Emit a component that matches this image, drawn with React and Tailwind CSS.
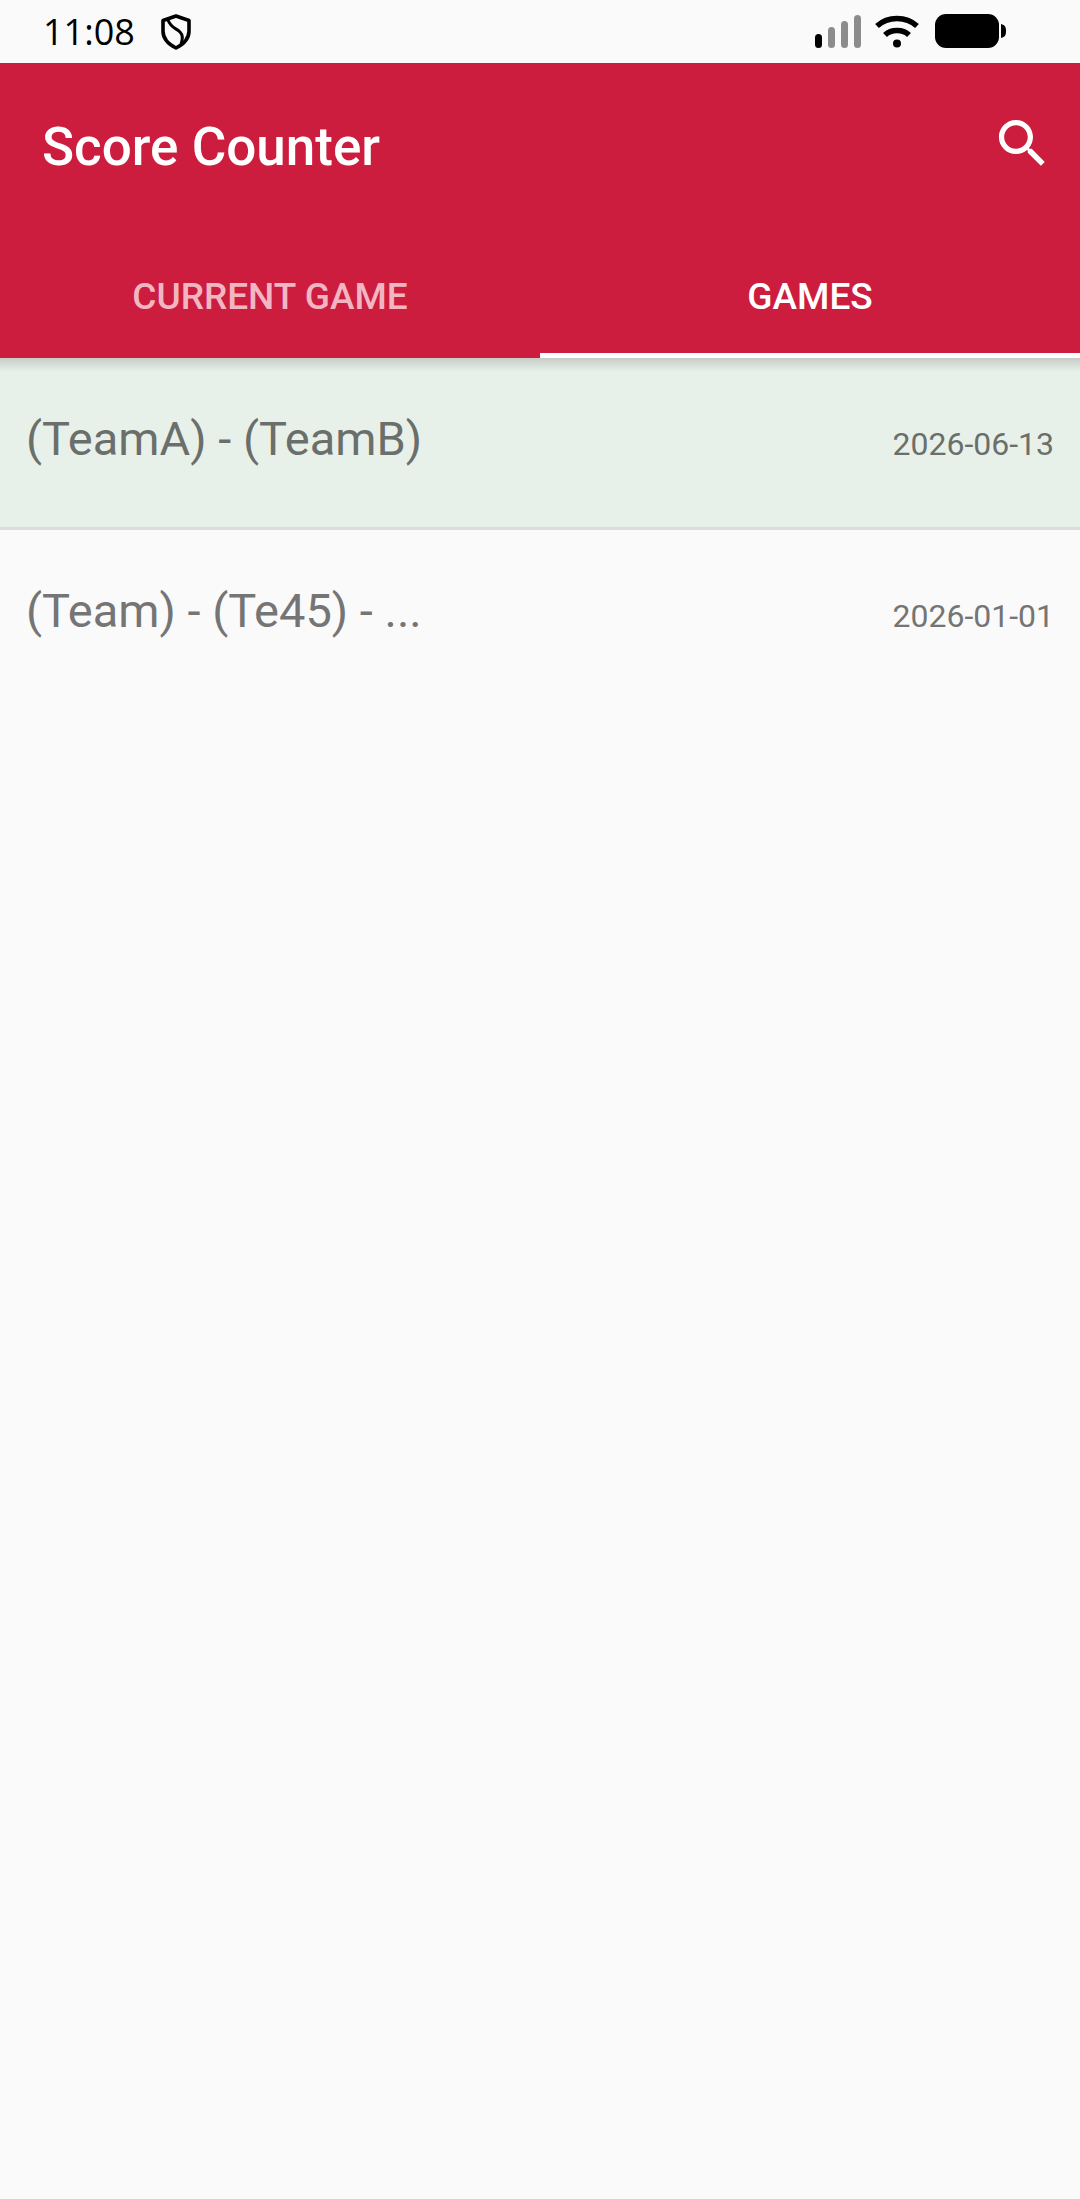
const ShieldIcon = () => (
  <svg width="32" height="36" viewBox="0 0 32 36" fill="none" stroke="#000" strokeWidth="3.6" className="ml-[1px]">
    <path d="M16 2 L29 6.5 V17 C29 25 23 30.5 16 34 C9 30.5 3 25 3 17 V6.5 Z" strokeLinejoin="round" />
    <path d="M8 6 C11 14 16 14 20 18 C23 21 23 25 21 30" strokeWidth="3" />
  </svg>
);

const StatusIcons = () => (
  <div className="flex items-center">
    <svg width="46" height="33" viewBox="0 0 46 33" className="mr-[14px]">
      <rect x="0" y="19" width="7" height="14" rx="3.5" fill="#000" />
      <rect x="13" y="12" width="7" height="21" rx="3.5" fill="#8c8c8c" />
      <rect x="26" y="6" width="7" height="27" rx="3.5" fill="#8c8c8c" />
      <rect x="39" y="0" width="7" height="33" rx="3.5" fill="#8c8c8c" />
    </svg>
    <svg width="44" height="33" viewBox="0 0 44 33" fill="none" stroke="#000" strokeWidth="5.5" className="mr-[16px]">
      <path d="M2 11 C13 1 31 1 42 11" />
      <path d="M10 20 C16 14 28 14 34 20" />
      <circle cx="22" cy="28.5" r="4" fill="#000" stroke="none" />
    </svg>
    <svg width="71" height="35" viewBox="0 0 71 35">
      <rect x="0" y="0" width="64" height="34" rx="11" fill="#000" />
      <path d="M66 10 C70 11 71 13 71 17 C71 21 70 23 66 24 Z" fill="#000" />
    </svg>
  </div>
);

const SearchIcon = () => (
  <svg width="63" height="63" viewBox="0 0 24 24" fill="#fff" className="mb-[8px]">
    <path d="M15.5 14h-.79l-.28-.27C15.41 12.59 16 11.11 16 9.5 16 5.91 13.09 3 9.5 3S3 5.91 3 9.5 5.91 16 9.5 16c1.61 0 3.09-.59 4.23-1.57l.27.28v.79l5 4.99L20.49 19l-4.99-5zm-6 0C7.01 14 5 11.99 5 9.5S7.01 5 9.5 5 14 7.01 14 9.5 11.99 14 9.5 14z" />
  </svg>
);

const games = [
  { title: "(TeamA) - (TeamB)", date: "2026-06-13", active: true },
  { title: "(Team) - (Te45) - ...", date: "2026-01-01", active: false },
];

export default function App() {
  return (
    <div className="min-h-[2199px] bg-[#fafafa] font-['Roboto',sans-serif]">
      {/* status bar */}
      <div className="h-[63px] flex items-center justify-between pl-[43px] pr-[74px]">
        <div className="flex items-center gap-[24px]">
          <span className="text-[36px] leading-none text-black font-['Open_Sans','Roboto',sans-serif]">11:08</span>
          <ShieldIcon />
        </div>
        <StatusIcons />
      </div>

      {/* app bar */}
      <div className="bg-[#cc1d3e] h-[295px] flex flex-col">
        <div className="h-[169px] flex items-center justify-between pl-[42px] pr-[26px]">
          <h1 className="text-[53px] font-medium text-white leading-none">Score Counter</h1>
          <SearchIcon />
        </div>
        <div className="flex-1 flex">
          <div className="flex-1 flex items-center justify-center pt-[8px] border-b-[5px] border-transparent text-[37px] font-medium text-[#f2b6c3]">
            CURRENT GAME
          </div>
          <div className="flex-1 flex items-center justify-center pt-[8px] border-b-[5px] border-white text-[37px] font-medium text-white">
            GAMES
          </div>
        </div>
      </div>

      {/* games list */}
      <div className="relative">
        <div className="absolute inset-x-0 top-0 h-[14px] bg-gradient-to-b from-black/15 to-transparent" />
        {games.map((game) => (
          <div
            key={game.date}
            className={`h-[172px] flex items-center justify-between pl-[26px] pr-[26px] pb-[6px] border-b-[3px] ${
              game.active ? "bg-[#e8f1e9] border-[#dcdcdc]" : "border-transparent"
            }`}
          >
            <span className={`text-[47px] ${game.active ? "text-[#6b6f6b]" : "text-[#757575]"}`}>{game.title}</span>
            <span className={`text-[32px] pt-[8px] ${game.active ? "text-[#6b6f6b]" : "text-[#757575]"}`}>{game.date}</span>
          </div>
        ))}
      </div>
    </div>
  );
}
